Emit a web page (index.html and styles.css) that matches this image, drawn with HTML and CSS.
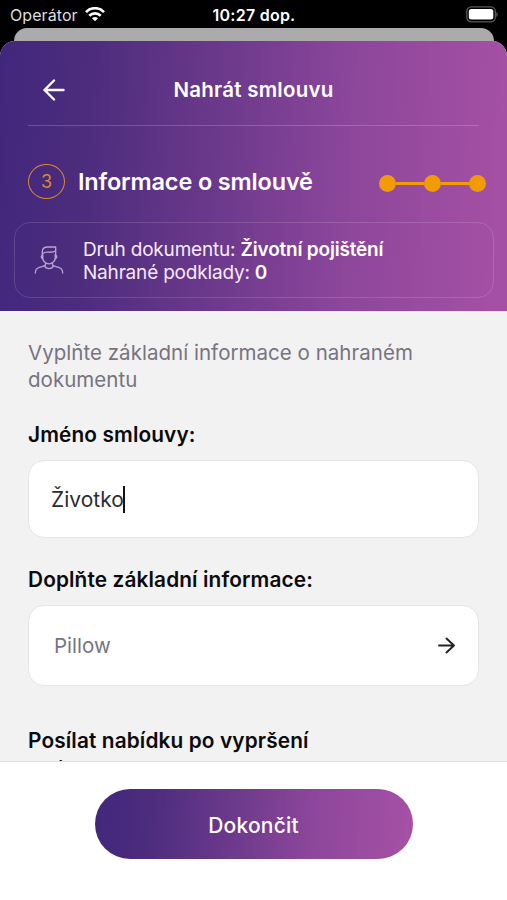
FILE: index.html
```html
<!DOCTYPE html>
<html lang="cs">
<head>
<meta charset="utf-8">
<meta name="viewport" content="width=device-width, initial-scale=1">
<title>Nahrát smlouvu</title>
<link rel="stylesheet" href="styles.css">
</head>
<body>
<div class="status">
  <div class="carrier"><span class="carrier-name">Operátor</span>
    <svg class="wifi" width="20" height="15" viewBox="0 0 20 15" fill="none" stroke="#fff" stroke-width="2.7"><path d="M1 5.1C6-.1 14-.1 19 5.1"/><path d="M4.3 8.8C7.5 5.5 12.500 5.500 15.700 8.800"/><path d="M10 14.300l-3-3c1.700-1.600 4.300-1.600 6 0z" fill="#fff" stroke="none"/></svg>
  </div>
  <span class="clock">10:27 dop.</span>
  <svg class="battery" width="33" height="17" viewBox="0 0 33 17"><rect x="1.800" y=".8" width="28.500" height="15" rx="4.500" fill="#000" stroke="#5b5b5b" stroke-width="1.300"/><rect x="3.800" y="3" width="24.500" height="10.500" rx="2.500" fill="#fff"/><path d="M31.300 6v5q1.500-1 1.500-2.500t-1.500-2.500z" fill="#5b5b5b"/></svg>
</div>
<div class="behind"></div>
<main class="sheet">
  <header class="header">
    <div class="nav">
      <svg class="back" width="22" height="22" viewBox="0 0 22 22" fill="none" stroke="#fff" stroke-width="2.400" stroke-linecap="round" stroke-linejoin="round"><path d="M20.500 11H1.500M11 1.500L1.500 11l9.500 9.500"/></svg>
      <h1 class="title">Nahrát smlouvu</h1>
    </div>
    <div class="step">
      <span class="number">3</span>
      <h2 class="step-title">Informace o smlouvě</h2>
      <div class="progress"><i class="dot"></i><i class="bar"></i><i class="dot"></i><i class="bar"></i><i class="dot"></i></div>
    </div>
    <div class="summary">
      <svg class="person" width="30" height="30" viewBox="0 0 30 30" fill="none" stroke="#b9a3cf" stroke-width="1.300" stroke-linecap="round" stroke-linejoin="round"><path d="M8.300 13V6.500C8.500 3.500 10.500 2 13.500 2h8.200v11"/><path d="M8.500 8.800C10 7.300 12 7 14.500 7.200c2.500.1 5.500 0 7-1.200M8.800 9.500v4c0 2.500 3 5.300 6.200 5.300s6.200-2.800 6.200-5.300v-4"/><path d="M8.300 10.500c-1.600 0-1.300 3 .5 3.300M21.700 10.500c1.600 0 1.300 3-.5 3.300"/><path d="M11.500 18v2c-1 1.200-3 1.500-5.500 2.200-3 .8-4.700 2.300-4.700 5.800M18.500 18v2c1 1.200 3 1.500 5.500 2.200 3 .8 4.700 2.300 4.700 5.800M10.500 20.800c1.500 3.700 7.500 3.700 9 0"/></svg>
      <div class="summary-text">
        <div class="line kind">Druh dokumentu: <b>Životní pojištění</b></div>
        <div class="line files">Nahrané podklady: <b>0</b></div>
      </div>
    </div>
  </header>
  <section class="form">
    <p class="intro"><span class="intro-first">Vyplňte základní informace o nahraném</span><br>dokumentu</p>
    <h3 class="label name-label">Jméno smlouvy:</h3>
    <div class="field name-field"><span class="value">Životko</span><i class="caret"></i></div>
    <h3 class="label info-label">Doplňte základní informace:</h3>
    <div class="field select"><span class="placeholder">Pillow</span>
      <svg width="17" height="17" viewBox="0 0 17 17" fill="none" stroke="#222" stroke-width="1.900" stroke-linecap="round" stroke-linejoin="round"><path d="M1 8.500h15M8.500 1.500l7.500 7-7.500 7"/></svg>
    </div>
    <h3 class="label offer-label">Posílat nabídku po vypršení<br><span class="second">mailem:</span></h3>
  </section>
  <footer class="footer"><button class="submit">Dokončit</button></footer>
</main>
</body>
</html>
```
FILE: styles.css
```css
* { box-sizing: border-box; }
body { margin: 0; width: 507px; height: 900px; overflow: hidden; background: #000; font-family: Inter, "Liberation Sans", sans-serif; color: #0b0b0d; }
h1, h2, h3, p { margin: 0; white-space: nowrap; }
.status { height: 28px; padding: 0 9px 0 10px; display: grid; grid-template-columns: 1fr auto 1fr; align-items: center; color: #fff; }
.carrier { display: flex; align-items: center; gap: 7px; font-size: 16px; line-height: 28px; color: #dedede; }
.carrier-name { letter-spacing: 0.08px; padding-top: 1px; }
.clock { font-size: 16px; font-weight: 600; line-height: 28px; letter-spacing: 0.25px; padding-top: 1px; }
.battery { justify-self: end; }
.behind { height: 13px; margin: 0 13.500px 0 14px; background: #ababab; border-radius: 13px 13px 0 0; }
.sheet { height: 859px; display: flex; flex-direction: column; background: #f2f2f3; border-radius: 15px 15px 0 0; overflow: hidden; }
.header { flex: none; height: 270.400px; padding: 0 14px; background: linear-gradient(93deg, #41277b 0%, #4c2c7d 17%, #733c8f 49%, #8b469a 67%, #a450a4 97%); color: #fff; }
.nav { height: 85px; margin: 0 14px; padding: 0 15px; display: grid; grid-template-columns: 22px 1fr 22px; align-items: center; border-bottom: 1px solid #ffffff30; padding-top: 13px; }
.title { padding-top: 1px; font-size: 20.500px; line-height: 28px; font-weight: 600; text-align: center; letter-spacing: 0.25px; }
.step { height: 96px; padding: 15px 0 0 14px; display: flex; align-items: center; }
.number { width: 37px; height: 35px; border: 1.500px solid #d98c2b; border-radius: 50%; color: #d98c2b; font-size: 18px; line-height: 33px; text-align: center; }
.step-title { flex: 1; margin-left: 13px; font-size: 23.500px; font-weight: 600; line-height: 30px; letter-spacing: -0.16px; }
.progress { display: flex; align-items: center; padding-right: 7px; margin-top: 3px; }
.dot { width: 17px; height: 17px; border-radius: 50%; background: #f19b07; }
.bar { width: 28px; height: 3px; background: #f19b07; }
.summary { height: 76px; margin-right: -1px; border: 1.500px solid #ffffff22; border-radius: 16px; display: flex; align-items: center; padding-left: 19px; }
.summary-text { margin-left: 19px; padding-top: 2px; font-size: 19px; line-height: 23px; letter-spacing: -0.19px; color: #f5eafb; white-space: nowrap; }
.summary-text b { font-weight: 600; color: #fff; }
.form { flex: 1; min-height: 0; overflow: hidden; padding: 27.600px 28px 0; }
.intro { font-size: 20.500px; line-height: 27px; letter-spacing: 0.03px; color: #777481; }
.label { font-size: 20.800px; line-height: 27px; font-weight: 600; letter-spacing: 0.13px; }
.name-label { margin-top: 28px; }
.field { height: 78px; margin-top: 12px; display: flex; align-items: center; background: #fff; border: 1px solid #e3e5e6; border-radius: 16px; padding: 1px 23px 0; font-size: 21px; }
.value { margin-left: -1px; color: #2d2d2e; }
.caret { width: 2px; height: 27px; margin-left: -1px; background: #111; }
.info-label { margin-top: 28px; }
.select { height: 81px; justify-content: space-between; padding-left: 25px; font-size: 20.500px; color: #777481; }
.offer-label { margin-top: 41px; }
.second { display: inline-block; padding-top: 2px; letter-spacing: -0.3px; }
.footer { flex: none; height: 139px; padding-top: 27px; border-top: 1.500px solid #e0e1e3; background: #fff; text-align: center; }
.submit { width: 318px; height: 70px; padding: 3px 0 0; border: 0; border-radius: 35px; background: linear-gradient(94deg, #41277b 0%, #4c2c7d 17%, #733c8f 49%, #8b469a 67%, #a450a4 97%); color: #fff; font: 500 21px/28px Inter, sans-serif; letter-spacing: 0.2px; }
```
